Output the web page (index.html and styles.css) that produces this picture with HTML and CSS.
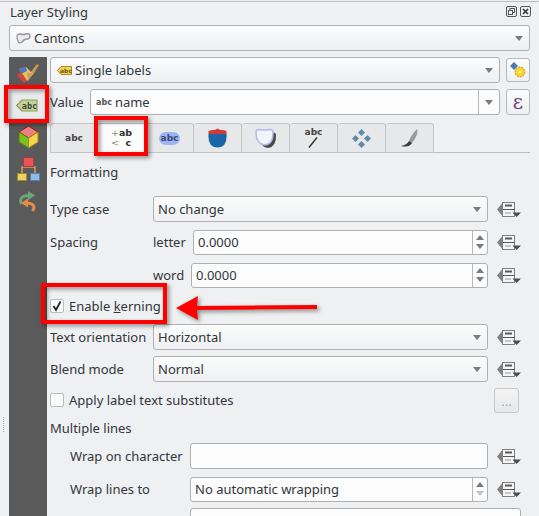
FILE: index.html
```html
<!DOCTYPE html>
<html>

<head>
    <title>Layer Styling</title>
    <link rel="stylesheet" href="styles.css">
</head>

<body>
    <svg class="defs" width="0" height="0">
        <symbol id="dd" viewBox="0 0 24 15">
            <path d="M0 7.5 L5 1.5 V13.5 Z" fill="#808080" />
            <rect x="5.5" y="0.5" width="12" height="14" fill="#f4f4f4" stroke="#808080" />
            <rect x="8" y="2.5" width="7" height="2" fill="#5a5a5a" />
            <path d="M6 7.5 H18" stroke="#5a5a5a" />
            <path d="M8 11 H14" stroke="#9a9a9a" />
            <path d="M15.5 10.5 H24 L19.7 15 Z" fill="#4d4d4d" />
        </symbol>
    </svg>

    <div class="titlebar">
        <span class="title">Layer Styling</span>
        <span class="win-btns">
            <svg width="11" height="11" viewBox="0 0 11 11">
                <rect x="0.5" y="0.5" width="10" height="10" rx="1.5" fill="none" stroke="#555" />
                <rect x="4" y="2.5" width="4.5" height="4" fill="none" stroke="#555" />
                <rect x="2.5" y="4.5" width="4" height="4" fill="#eff0f1" stroke="#555" />
            </svg>
            <svg width="11" height="11" viewBox="0 0 11 11">
                <rect x="0.5" y="0.5" width="10" height="10" rx="1.5" fill="none" stroke="#555" />
                <path d="M3 3 L8 8 M8 3 L3 8" stroke="#333" stroke-width="1.6" />
            </svg>
        </span>
    </div>

    <div class="combo layer-combo">
        <svg class="ico" width="15" height="11" viewBox="0 0 15 11">
            <path d="M1 3 Q1 1 4 1 Q7 2 10 1 Q14 0 14 3 Q14 6 11 6 Q8 6 6 9 Q3 11 2 8 Q1 6 1 3 Z" fill="#ececec" stroke="#999" stroke-width="1.4" />
        </svg>
        <span>Cantons</span>
        <i class="arrow"></i>
    </div>

    <div class="content">
        <div class="gutter"><div class="grip"></div></div>

        <div class="sidebar">
            <div class="side-item">
                <svg width="24" height="22" viewBox="0 0 24 22">
                    <path d="M14 11 L21 2 L23 3 L17 13 Z" fill="#c99a4f" />
                    <path d="M3 7 L10 5 L17 12 L11 19 Z" fill="#e6c65a" />
                    <path d="M3 7 L10 5 L11 9 L5 12 Z" fill="#4a78c8" />
                    <path d="M1 13 L5 10 L11 19 L8 21 Z" fill="#d8443c" />
                    <path d="M11 10 L17 12 L12 19 Z" fill="#c9a06a" />
                </svg>
            </div>
            <div class="side-item active">
                <svg class="tag-icon" width="22" height="13" viewBox="0 0 22 13">
                    <path d="M0.7 6.5 L6 1 H21 V12 H6 Z" fill="#c5d19b" stroke="#8f9f55" stroke-width="1.2" />
                    <text x="13.5" y="9.5" class="tag-text">abc</text>
                </svg>
            </div>
            <div class="side-item">
                <svg width="21" height="24" viewBox="0 0 21 24">
                    <path d="M10.5 1 L20 7 L10.5 13 L1 7 Z" fill="#f08080" stroke="#8b1a1a" />
                    <path d="M1 7 L10.5 13 V23 L1 17 Z" fill="#7cc21f" stroke="#4f7d10" />
                    <path d="M20 7 L10.5 13 V23 L20 17 Z" fill="#f3d64a" stroke="#a68a1c" />
                </svg>
            </div>
            <div class="side-item">
                <svg width="23" height="24" viewBox="0 0 23 24">
                    <path d="M5 17 V10 H18 V17 M8 9 V5 M15 9 V5" fill="none" stroke="#d0a060" stroke-width="1.5" />
                    <rect x="6.5" y="0.5" width="10" height="9" fill="#e8545a" stroke="#a04040" />
                    <rect x="0.5" y="16.5" width="9" height="7" fill="#f0d060" stroke="#a08a30" />
                    <rect x="13.5" y="16.5" width="9" height="7" fill="#8fbbe8" stroke="#5a80a8" />
                </svg>
            </div>
            <div class="side-item">
                <svg width="20" height="21" viewBox="0 0 20 21">
                    <path d="M11 4.5 C4 4.5 1 8 3.500 13" fill="none" stroke="#68a878" stroke-width="3" />
                    <path d="M10 0 L17 4.500 L10 9 Z" fill="#68a878" />
                    <path d="M8 12 C15 12 18 15 14.500 20" fill="none" stroke="#e88a48" stroke-width="3" />
                    <path d="M10 7.500 L3 12 L10 16.500 Z" fill="#e88a48" />
                </svg>
            </div>
        </div>

        <div class="main">
            <div class="top-row">
                <div class="combo grow">
                    <svg class="ico" width="15" height="9" viewBox="0 0 15 9">
                        <path d="M0.5 4.5 L4 0.5 H14.5 V8.5 H4 Z" fill="#f2d45c" stroke="#a88a20" />
                        <text x="9" y="6.8" class="mini-text">abc</text>
                    </svg>
                    <span>Single labels</span>
                    <i class="arrow"></i>
                </div>
                <div class="tool-btn">
                    <svg width="16" height="16" viewBox="0 0 16 16">
                        <path d="M4 0 L8 4 L4 8 L0 4 Z" fill="#4f7ba8" />
                        <circle cx="10" cy="10" r="5" fill="#f6d32d" stroke="#c9a010" stroke-dasharray="2 1" />
                        <circle cx="10" cy="10" r="1.6" fill="#fdf0a0" />
                    </svg>
                </div>
            </div>

            <div class="top-row value-row">
                <span class="value-label">Value</span>
                <div class="field value-field">
                    <span class="abc-hint">abc</span>
                    <span>name</span>
                    <div class="drop-part"><i class="arrow"></i></div>
                </div>
                <div class="tool-btn epsilon">ε</div>
            </div>

            <div class="tabs">
                <div class="tab"><span class="abc">abc</span></div>
                <div class="tab selected">
                    <div class="fmt-icon"><span><b class="pale">+</b>ab</span><span><b class="pale">&lt;</b>&nbsp;&nbsp;c</span></div>
                </div>
                <div class="tab"><span class="abc blob">abc</span></div>
                <div class="tab">
                    <svg width="19" height="20" viewBox="0 0 19 20">
                        <path d="M0.500 6 V3 Q3 2 5 2 Q7 2 9.500 0.500 Q12 2 14 2 Q16 2 18.500 3 V6 Z" fill="#d03a3a" />
                        <path d="M0.500 6 H18.500 Q19.500 19.500 9.500 19.500 Q-0.500 19.500 0.500 6 Z" fill="#1c64a8" />
                    </svg>
                </div>
                <div class="tab">
                    <svg width="22" height="21" viewBox="0 0 22 21">
                        <path transform="translate(3 3)" d="M1 4 Q1 1.500 4 1.500 Q9 2.500 15 1.500 Q18 1.500 18 4 Q18.500 16 10 17 Q1 16 1 4 Z" fill="#4a4a4a" />
                        <path d="M1 4 Q1 1.500 4 1.500 Q9 2.500 15 1.500 Q18 1.500 18 4 Q18.500 16 10 17 Q1 16 1 4 Z" fill="#f2f4fc" stroke="#b4bce8" stroke-width="1.400" />
                    </svg>
                </div>
                <div class="tab">
                    <div class="line-icon">
                        <span class="abc">abc</span>
                        <svg width="10" height="11" viewBox="0 0 10 11"><path d="M9 0.500 L1 10.500" stroke="#333" stroke-width="1.400" /></svg>
                    </div>
                </div>
                <div class="tab">
                    <svg width="19" height="19" viewBox="0 0 19 19">
                        <path d="M9.500 0 L13 3.500 L9.500 7 L6 3.500 Z M9.500 12 L13 15.500 L9.500 19 L6 15.500 Z M3.500 6 L7 9.500 L3.500 13 L0 9.500 Z M15.500 6 L19 9.500 L15.500 13 L12 9.500 Z" fill="#5f8cab" />
                    </svg>
                </div>
                <div class="tab">
                    <svg width="18" height="19" viewBox="0 0 18 19">
                        <path d="M16 0 Q18 5 11 14 L8 12 Q10 6 16 0 Z" fill="#9a9a9a" />
                        <path d="M8 12 L11 14 Q8 19 0 17 Q6 16 8 12 Z" fill="#3a3a3a" />
                    </svg>
                </div>
            </div>

            <div class="section-head">Formatting</div>

            <div class="form">
                <div class="row">
                    <span class="lbl">Type case</span>
                    <div class="combo grow"><span>No change</span><i class="arrow"></i></div>
                    <svg class="dd"><use href="#dd" /></svg>
                </div>
                <div class="row spin-row">
                    <span class="lbl">Spacing</span>
                    <span class="sub-lbl">letter</span>
                    <div class="field spin grow">
                        <span>0.0000</span>
                        <div class="spin-part"><i class="up"></i><i class="down"></i></div>
                    </div>
                    <svg class="dd"><use href="#dd" /></svg>
                </div>
                <div class="row spin-row">
                    <span class="lbl"></span>
                    <span class="sub-lbl short">word</span>
                    <div class="field spin grow">
                        <span>0.0000</span>
                        <div class="spin-part"><i class="up"></i><i class="down"></i></div>
                    </div>
                    <svg class="dd"><use href="#dd" /></svg>
                </div>
                <div class="row tight">
                    <span class="check">
                        <svg width="12" height="12" viewBox="0 0 12 12"><path d="M2.500 6 L5 10 L9.500 1.500" fill="none" stroke="#232629" stroke-width="1.800" /></svg>
                    </span>
                    <span>Enable <u>k</u>erning</span>
                </div>
                <div class="row tight">
                    <span class="lbl">Text orientation</span>
                    <div class="combo grow"><span>Horizontal</span><i class="arrow"></i></div>
                    <svg class="dd"><use href="#dd" /></svg>
                </div>
                <div class="row">
                    <span class="lbl">Blend mode</span>
                    <div class="combo grow"><span>Normal</span><i class="arrow"></i></div>
                    <svg class="dd"><use href="#dd" /></svg>
                </div>
                <div class="row tight">
                    <span class="check"></span>
                    <span class="grow">Apply label text substitutes</span>
                    <div class="dots-btn">...</div>
                </div>
                <div class="row head-row">Multiple lines</div>
                <div class="row nested">
                    <span class="nested-lbl">Wrap on character</span>
                    <div class="field grow"></div>
                    <svg class="dd"><use href="#dd" /></svg>
                </div>
                <div class="row nested spin-row">
                    <span class="nested-lbl">Wrap lines to</span>
                    <div class="field spin grow">
                        <span>No automatic wrapping</span>
                        <div class="spin-part"><i class="up"></i><i class="down off"></i></div>
                    </div>
                    <svg class="dd"><use href="#dd" /></svg>
                </div>
                <div class="row nested">
                    <span class="nested-lbl"></span>
                    <div class="field grow"></div>
                </div>
            </div>
        </div>
    </div>

    <!-- red annotations on top of the screenshot -->
    <div class="mark mark-side"></div>
    <div class="mark mark-tab"></div>
    <div class="mark mark-kern"></div>
    <svg class="mark-arrow" width="144" height="30" viewBox="0 0 144 30">
        <path d="M0 13 L22 1 L21 11 L141 10 V14 L21 15 L22 25 Z" fill="#f00" />
    </svg>
</body>

</html>
```

FILE: styles.css
```css
* {
    box-sizing: border-box;
}

body {
    margin: 0;
    width: 539px;
    height: 516px;
    overflow: hidden;
    position: relative;
    background-color: #eff0f1;
    color: #31363b;
    font-family: "Noto Sans", sans-serif;
    font-size: 13px;
}

.defs {
    display: block;
}

.grow {
    flex: 1;
    min-width: 0;
}

/* title */
.titlebar {
    margin-top: 1px;
    height: 24px;
    border-top: 1px solid #bdbdbd;
    padding: 1px 8px 0 10px;
    display: flex;
    justify-content: space-between;
    align-items: flex-start;
}

.title {
    line-height: 18px;
}

.win-btns {
    display: flex;
    gap: 3px;
    margin-top: 3px;
}

/* controls */
.combo,
.field {
    height: 26px;
    display: flex;
    align-items: center;
    border: 1px solid #b0b0b0;
    border-radius: 3px;
    padding-left: 4px;
    position: relative;
}

.combo {
    background: linear-gradient(#fcfcfc, #eef0f1);
    padding-right: 5px;
}

.combo .arrow {
    margin-left: auto;
    margin-right: 1px;
}

.field {
    background-color: #fcfcfc;
}

.ico {
    margin: 0 3px 0 2px;
}

.arrow {
    display: block;
    width: 0;
    height: 0;
    border-left: 4px solid transparent;
    border-right: 4px solid transparent;
    border-top: 5px solid #7a7a7a;
}

.layer-combo {
    margin: 0 9px;
}

.content {
    display: flex;
    margin-top: 6px;
    height: 459px;
}

.gutter {
    width: 9px;
    padding: 360px 0 0 3px;
}

.grip {
    height: 15px;
    border-left: 1px dotted #a8a8a8;
}

/* left icon strip */
.sidebar {
    width: 38px;
    background-color: #5a5a5a;
    display: flex;
    flex-direction: column;
}

.side-item {
    height: 32px;
    display: flex;
    align-items: center;
    justify-content: center;
}

.side-item.active {
    background-color: #e9eaeb;
}

.tag-icon {
    margin-right: 2px;
}

.tag-text {
    font-family: "DejaVu Sans Mono", monospace;
    font-size: 8.500px;
    font-weight: bold;
    fill: #3c4a3c;
    text-anchor: middle;
}

.mini-text {
    font-family: "DejaVu Sans", sans-serif;
    font-size: 6px;
    font-weight: bold;
    fill: #6b5a10;
    text-anchor: middle;
}

.main {
    width: 480px;
    margin-left: 3px;
    overflow: hidden;
}

.top-row {
    display: flex;
    gap: 6px;
    align-items: center;
    height: 26px;
    margin-bottom: 6px;
}

.tool-btn {
    width: 24px;
    height: 24px;
    border: 1px solid #b8b8b8;
    border-radius: 3px;
    background: linear-gradient(#fcfcfc, #eef0f1);
    display: flex;
    align-items: center;
    justify-content: center;
}

.epsilon {
    height: 26px;
    color: #6e3d83;
    font-family: "DejaVu Serif", serif;
    font-size: 20px;
    line-height: 1;
}

.value-label {
    width: 34px;
}

.value-field {
    width: 410px;
    padding-left: 5px;
}

.abc-hint {
    font-family: "DejaVu Sans", sans-serif;
    font-size: 8px;
    font-weight: bold;
    color: #555;
    margin-right: 3px;
}

.drop-part {
    margin-left: auto;
    width: 21px;
    height: 100%;
    border-left: 1px solid #b8b8b8;
    display: flex;
    align-items: center;
    justify-content: center;
}

/* tabs */
.tabs {
    display: flex;
    height: 30px;
    margin-top: 8px;
    border-bottom: 1px solid #bdbdbd;
}

.tab {
    width: 48px;
    height: 30px;
    background-color: #e7e8e9;
    border: 1px solid #c4c4c4;
    border-left-width: 0;
    border-radius: 3px 3px 0 0;
    display: flex;
    align-items: center;
    justify-content: center;
}

.tab:first-child {
    border-left-width: 1px;
}

.tab.selected {
    background-color: #fcfcfc;
    border-bottom-color: #fcfcfc;
}

.abc {
    font-family: "DejaVu Sans", sans-serif;
    font-size: 9px;
    font-weight: bold;
    color: #444;
    line-height: 1;
}

.blob {
    background-color: #9db4f2;
    border-radius: 7px;
    padding: 2px 2px;
    color: #3a4a78;
}

.fmt-icon {
    display: flex;
    flex-direction: column;
    font-family: "DejaVu Sans", sans-serif;
    font-size: 9.500px;
    font-weight: bold;
    line-height: 10px;
    color: #333;
}

.pale {
    font-weight: normal;
    color: #888;
}

.line-icon {
    display: flex;
    flex-direction: column;
    align-items: center;
    line-height: 0;
}

.section-head {
    margin-top: 9px;
    height: 20px;
    line-height: 20px;
}

/* form rows */
.form {
    display: flex;
    flex-direction: column;
    gap: 6px;
    margin-top: 14px;
    width: 471px;
}

.row {
    display: flex;
    align-items: center;
    height: 26px;
    flex-shrink: 0;
}

.spin-row {
    margin-top: 1px;
}

.tight {
    margin-top: -1px;
}

.lbl {
    width: 103px;
    flex-shrink: 0;
}

.sub-lbl {
    width: 40px;
}

.sub-lbl.short {
    width: 38px;
}

.dd {
    width: 24px;
    height: 15px;
    margin-left: 9px;
    flex-shrink: 0;
}

.spin {
    height: 25px;
}

.spin-part {
    margin-left: auto;
    width: 15px;
    height: 100%;
    border-left: 1px solid #b8b8b8;
    display: flex;
    flex-direction: column;
    align-items: center;
    justify-content: center;
    gap: 4px;
}

.up,
.down {
    display: block;
    width: 0;
    height: 0;
    border-left: 4px solid transparent;
    border-right: 4px solid transparent;
}

.up {
    border-bottom: 5px solid #7a7a7a;
}

.down {
    border-top: 5px solid #7a7a7a;
}

.down.off {
    border-top-color: #c4c4c4;
}

.check {
    width: 14px;
    height: 14px;
    background-color: #fcfcfc;
    border: 1px solid #bcbcbc;
    border-radius: 2px;
    margin-right: 5px;
    display: flex;
    align-items: center;
    justify-content: center;
}

.dots-btn {
    width: 25px;
    height: 25px;
    margin-right: 2px;
    border: 1px solid #c8c8c8;
    border-radius: 3px;
    background: linear-gradient(#f4f4f5, #e6e7e8);
    color: #a8a8a8;
    text-align: center;
    line-height: 24px;
}

.head-row {
    height: 18px;
}

.nested {
    padding-left: 20px;
}

.nested-lbl {
    width: 120px;
    flex-shrink: 0;
}

/* annotations */
.mark {
    position: absolute;
    border: 4px solid #f00;
    filter: drop-shadow(2px 2px 2px rgba(0, 0, 0, 0.45));
}

.mark-side {
    left: 4px;
    top: 85px;
    width: 45px;
    height: 38px;
}

.mark-tab {
    left: 94px;
    top: 116px;
    width: 54px;
    height: 40px;
}

.mark-kern {
    left: 41px;
    top: 283px;
    width: 126px;
    height: 41px;
}

.mark-arrow {
    position: absolute;
    left: 176px;
    top: 295px;
    filter: drop-shadow(2px 2px 2px rgba(0, 0, 0, 0.45));
}
```
